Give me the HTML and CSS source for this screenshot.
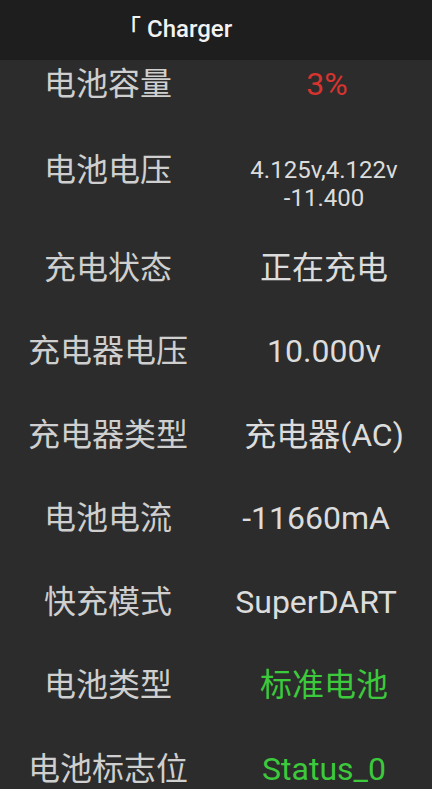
FILE: index.html
```html
<!DOCTYPE html>
<html lang="zh-CN">
<head>
    <meta charset="UTF-8">
    <meta name="viewport" content="width=device-width, initial-scale=1.0">
    <title>Charger</title>
    <link rel="stylesheet" href="styles.css">
</head>
<body>

    <div class="header">
        <span class="title">「 Charger</span>
    </div>

    <div class="list">
        <div class="row">
            <div class="label">电池容量</div>
            <div class="value red pct">3%</div>
        </div>
        <div class="row tall">
            <div class="label">电池电压</div>
            <div class="value small">4.125v,4.122v<br>-11.400</div>
        </div>
        <div class="row">
            <div class="label">充电状态</div>
            <div class="value">正在充电</div>
        </div>
        <div class="row">
            <div class="label">充电器电压</div>
            <div class="value">10.000v</div>
        </div>
        <div class="row">
            <div class="label">充电器类型</div>
            <div class="value">充电器(AC)</div>
        </div>
        <div class="row">
            <div class="label">电池电流</div>
            <div class="value trail">-11660mA</div>
        </div>
        <div class="row">
            <div class="label">快充模式</div>
            <div class="value trail">SuperDART</div>
        </div>
        <div class="row">
            <div class="label">电池类型</div>
            <div class="value green">标准电池</div>
        </div>
        <div class="row">
            <div class="label">电池标志位</div>
            <div class="value green">Status_0</div>
        </div>
    </div>

</body>
</html>
```

FILE: styles.css
```css
body{
    margin: 0;
    background-color: #2c2c2c;
    font-family: Roboto, "Noto Sans CJK SC", sans-serif;
    overflow: hidden;
}
.header{
    position: relative;
    z-index: 1;
    height: 60px;
    background-color: #1e1e1e;
    display: flex;
    align-items: center;
    padding-left: 117px;
}
.title{
    color: #f2f2f2;
    font-size: 24px;
    font-weight: 500;
    margin-top: -7px;
}
/* list is scrolled a little under the header */
.list{
    margin-top: -18px;
}
.row{
    display: grid;
    grid-template-columns: 1fr 1fr;
    align-items: center;
    height: 83.5px;
}
.label,
.value{
    text-align: center;
    font-size: 32px;
    line-height: 36px;
    white-space: nowrap;
}
.label{
    color: #cfcfcf;
}
.value{
    color: #dcdcdc;
}
.row.tall{
    height: 100.5px;
    align-items: start;
}
.row.tall .label{
    padding-top: 26px;
}
.value.small{
    font-size: 24px;
    line-height: 28px;
    padding-top: 30px;
}
.value.trail{
    padding-right: 16px;
}
.value.pct{
    padding-left: 6px;
}
.red{
    color: #d8342f;
}
.green{
    color: #3cc93c;
}
```
